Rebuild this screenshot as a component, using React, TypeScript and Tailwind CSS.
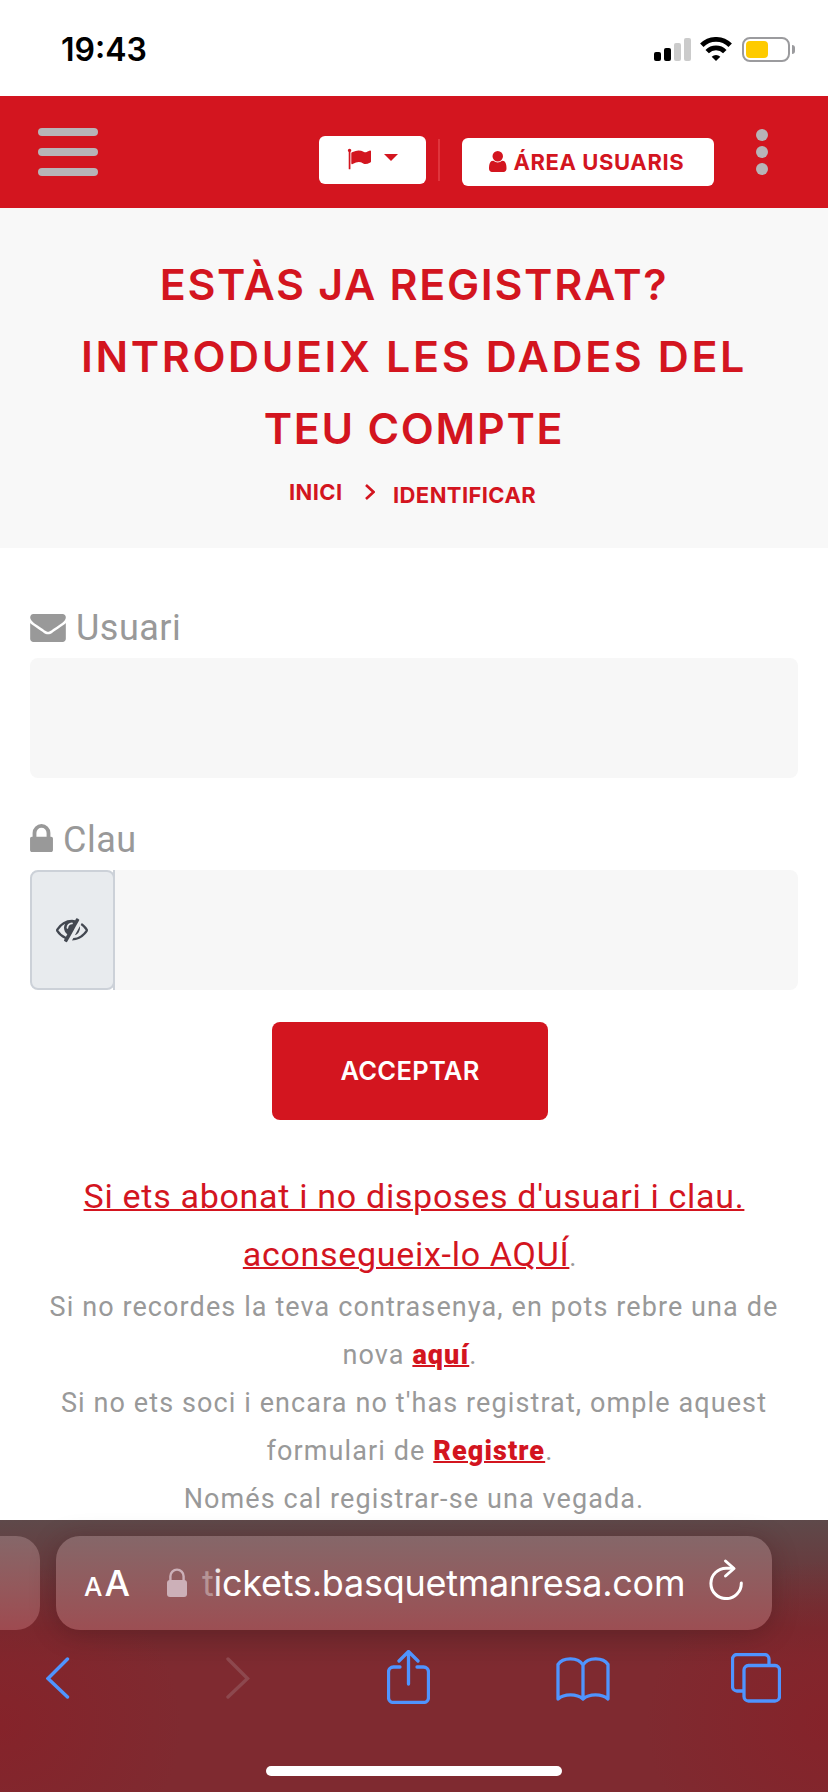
import type { ReactNode } from "react";

const icons = {
  flag: "M320 256q0 72-64 110v1266q0 13-9.5 22.5t-22.5 9.5h-64q-13 0-22.5-9.5t-9.5-22.5v-1266q-64-38-64-110 0-53 37.5-90.5t90.5-37.5 90.5 37.5 37.5 90.5zm1472 64v763q0 25-12.5 38.5t-39.5 27.5q-215 116-369 116-61 0-123.5-22t-108.5-48-115.5-48-142.5-22q-192 0-464 146-17 9-33 9-26 0-45-19t-19-45v-742q0-32 31-55 21-14 79-43 236-120 421-120 107 0 200 29t219 88q38 19 88 19 54 0 117.5-21t110-47 88-47 54.5-21q26 0 45 19t19 45z",
  user: "M1536 1399q0 109-62.5 187t-150.5 78h-854q-88 0-150.5-78t-62.5-187q0-85 8.5-160.5t31.5-152 58.5-131 94-89 134.5-34.5q131 128 313 128t313-128q76 0 134.5 34.5t94 89 58.5 131 31.5 152 8.5 160.5zm-256-887q0 159-112.5 271.5t-271.5 112.5-271.5-112.5-112.5-271.5 112.5-271.5 271.5-112.5 271.5 112.5 112.5 271.5z",
  envelope:
    "M1792 710v794q0 66-47 113t-113 47h-1472q-66 0-113-47t-47-113v-794q44 49 101 87 362 246 497 345 57 42 92.5 65.5t94.5 48 110 24.5h2q51 0 110-24.5t94.5-48 92.5-65.5q170-123 498-345 57-39 100-87zm0-294q0 79-49 151t-122 123q-376 261-468 325-10 7-42.5 31t-54 38.5-52 32.5-57.5 27-50 9h-2q-23 0-50-9t-57.5-27-52-32.5-54-38.5-42.5-31q-91-64-262-182.5t-205-142.5q-62-42-117-115.5t-55-136.5q0-78 41.5-130t118.5-52h1472q65 0 112.5 47t47.5 113z",
  lock: "M640 768h512v-192q0-106-75-181t-181-75-181 75-75 181v192zm832 96v576q0 40-28 68t-68 28h-960q-40 0-68-28t-28-68v-576q0-40 28-68t68-28h32v-192q0-184 132-316t316-132 316 132 132 316v192h32q40 0 68 28t28 68z",
  eyeSlash:
    "M555 1335l78-141q-87-63-136-159t-49-203q0-121 61-225-229 117-381 353 167 258 427 375zm389-759q0-20-14-34t-34-14q-125 0-214.5 89.5t-89.5 214.5q0 20 14 34t34 14 34-14 14-34q0-86 61-147t147-61q20 0 34-14t14-34zm363-191q0 7-1 9-105 188-315 566t-316 567l-49 89q-10 16-28 16-12 0-134-70-16-10-16-28 0-12 44-87-143-65-263.5-173t-208.5-245q-20-31-20-69t20-69q153-235 380-371t496-136q89 0 180 17l54-97q10-16 28-16 5 0 18 6t31 15.5 33 18.5 31.5 18.5 19.5 11.5q16 10 16 27zm37 447q0 139-79 253.5t-209 164.5l280-502q8 45 8 84zm448 128q0 35-20 69-39 64-109 145-150 172-347.5 267t-419.5 95l74-132q212-18 392.5-137t301.5-307q-115-179-282-294l63-112q95 64 182.5 153t144.5 184q20 34 20 69z",
};

function Icon({ name, box, className }: { name: keyof typeof icons; box: string; className: string }) {
  return (
    <svg viewBox={box} fill="currentColor" className={className}>
      <path d={icons[name]} />
    </svg>
  );
}

function StatusBar() {
  return (
    <div className="flex h-24 items-start justify-between bg-white pl-[61px] pr-[33px] font-['Inter',sans-serif]">
      <span className="mt-[30px] text-[32px] font-semibold leading-10 text-black">19:43</span>
      <div className="mt-[37px] flex items-start">
        <div className="mt-px flex h-[23px] items-end gap-[3px]">
          <i className="h-[9px] w-[7px] rounded-[2px] bg-black" />
          <i className="h-[13px] w-[7px] rounded-[2px] bg-black" />
          <i className="h-[18px] w-[7px] rounded-[2px] bg-[#cbcbcb]" />
          <i className="h-[23px] w-[7px] rounded-[2px] bg-[#cbcbcb]" />
        </div>
        <svg viewBox="0 0 32 24" className="ml-[9px] h-6 w-8" fill="none" stroke="#000" strokeWidth="4.8">
          <path d="M1.800 8.300a20 20 0 0 1 28.400 0" />
          <path d="M7.200 14.600a12.300 12.300 0 0 1 17.600 0" />
          <path d="M16 24l-4.300-4.300a6.200 6.200 0 0 1 8.600 0z" fill="#000" stroke="none" />
        </svg>
        <div className="ml-[10px] flex h-[25px] w-12 rounded-[8px] border-2 border-[#9b9b9e] p-[2px]">
          <div className="h-[17px] w-[22px] rounded-[4px] bg-[#fecb00]" />
        </div>
        <div className="ml-[2px] mt-[8px] h-[9px] w-[3px] rounded-r-full bg-[#9b9b9e]" />
      </div>
    </div>
  );
}

function Header() {
  return (
    <header className="flex h-28 items-start bg-[#d3151f] pl-[38px] text-[#d3151f]">
      <div className="mt-8 flex flex-col gap-3">
        <i className="h-2 w-[60px] rounded-full bg-[#b7b4b7]" />
        <i className="h-2 w-[60px] rounded-full bg-[#b7b4b7]" />
        <i className="h-2 w-[60px] rounded-full bg-[#b7b4b7]" />
      </div>
      <button className="ml-[221px] mt-10 flex h-12 w-[107px] items-start rounded-[6px] bg-white pl-[28px] pt-[11px]">
        <Icon name="flag" box="0 0 1792 1792" className="h-6 w-6" />
        <svg viewBox="0 0 14 7" className="ml-[13px] mt-[7px] h-[7px] w-[14px]" fill="currentColor">
          <path d="M0 0h14L7 7z" />
        </svg>
      </button>
      <i className="ml-3 mt-[43px] h-[42px] w-[2px] bg-[#e0353c]" />
      <button className="ml-[22px] mt-[42px] flex h-12 w-[252px] items-start rounded-[6px] bg-white pl-[27px]">
        <Icon name="user" box="256 128 1280 1536" className="mt-[13px] h-[21px] w-[17.5px]" />
        <span className="ml-[7px] mt-[8px] whitespace-nowrap font-['Inter',sans-serif] text-[22px] font-bold leading-8 tracking-[0.6px]">
          ÁREA USUARIS
        </span>
      </button>
      <div className="ml-[42px] mt-[33px] flex flex-col gap-[5px]">
        <i className="size-3 rounded-full bg-[#b7b4b7]" />
        <i className="size-3 rounded-full bg-[#b7b4b7]" />
        <i className="size-3 rounded-full bg-[#b7b4b7]" />
      </div>
    </header>
  );
}

function PageTitle() {
  return (
    <section className="h-[340px] bg-[#f8f8f8] pt-10 text-center font-['Inter',sans-serif] text-[#d3151f]">
      <h1 className="whitespace-nowrap text-[43px] font-semibold leading-[72px]">
        <span className="block tracking-[1.7px]">ESTÀS JA REGISTRAT?</span>
        <span className="block tracking-[2.6px]">INTRODUEIX LES DADES DEL</span>
        <span className="block tracking-[1.7px]">TEU COMPTE</span>
      </h1>
      <nav className="flex items-start pl-[289px] text-[22px] font-bold leading-8 tracking-[0.4px]">
        <span className="w-[76px] pt-[12px] text-left">INICI</span>
        <svg viewBox="0 0 10 16" className="mt-[20px] h-4 w-[10px]" fill="none" stroke="currentColor" strokeWidth="2.6">
          <path d="M1 1l7.500 7L1 15" />
        </svg>
        <span className="ml-[18px] pt-[15px]">IDENTIFICAR</span>
      </nav>
    </section>
  );
}

function FieldLabel({ icon, children }: { icon: ReactNode; children: ReactNode }) {
  return (
    <label className="flex h-11 items-start text-[36px] leading-[46px] tracking-[0.5px] text-[#999]">
      {icon}
      {children}
    </label>
  );
}

function LoginForm() {
  return (
    <form className="flex flex-col px-[30px] pt-[57px]">
      <FieldLabel icon={<Icon name="envelope" box="0 256 1792 1408" className="mr-[10px] mt-[9px] h-7 w-9" />}>
        Usuari
      </FieldLabel>
      <div className="mt-[9px] h-[120px] rounded-[8px] bg-[#f7f7f7]" />
      <div className="mt-[39px]">
        <FieldLabel icon={<Icon name="lock" box="320 128 1152 1408" className="mr-[10px] mt-[7px] h-7 w-[23px]" />}>
          Clau
        </FieldLabel>
      </div>
      <div className="mt-[9px] flex h-[120px]">
        <div className="flex w-[85px] border-r-2 border-[#ccd1d8]">
          <div className="-mr-[2px] flex w-[85px] shrink-0 items-start justify-center rounded-[8px] border-2 border-[#ccd1d8] bg-[#e8ebee] pr-[2px] pt-[41px] text-[#434851]">
            <Icon name="eyeSlash" box="0 0 1792 1792" className="h-8 w-8" />
          </div>
        </div>
        <div className="flex-1 rounded-r-[8px] bg-[#f7f7f7]" />
      </div>
      <button className="ml-[242px] mt-8 h-[98px] w-[276px] rounded-[8px] bg-[#d3151f] font-['Inter',sans-serif] text-[25.5px] font-semibold tracking-[0.3px] text-white">
        ACCEPTAR
      </button>
    </form>
  );
}

function HelpText() {
  return (
    <div className="mt-[47px] whitespace-nowrap text-center text-[27px] leading-[48px] tracking-[1.1px] text-[#999]">
      <p className="text-[34px] leading-[58px] tracking-[0.7px]">
        <a className="text-[#d3151f] underline decoration-2">
          Si ets abonat i no disposes d'usuari i clau.
          <br />
          aconsegueix-lo AQUÍ
        </a>
        <span className="pr-2 text-[27px] leading-none">.</span>
      </p>
      <p>
        Si no recordes la teva contrasenya, en pots rebre una de
        <br />
        nova <a className="font-black text-[#d3151f] underline decoration-2">aquí</a>
        <span className="pr-2">.</span>
      </p>
      <p>
        Si no ets soci i encara no t'has registrat, omple aquest
        <br />
        formulari de <a className="font-black text-[#d3151f] underline decoration-2">Registre</a>
        <span className="pr-2">.</span>
      </p>
      <p>Només cal registrar-se una vegada.</p>
    </div>
  );
}

function BrowserBar() {
  return (
    <footer className="flex h-[272px] flex-col bg-[radial-gradient(ellipse_22%_60%_at_0%_75%,#85232a,transparent),radial-gradient(ellipse_22%_60%_at_100%_75%,#85232a,transparent),linear-gradient(#5e494a,#742a2f_40%,#7f2a30_55%,#7f2a30)] font-['Inter',sans-serif] text-white">
      <div className="flex h-[110px] gap-4 pt-4">
        <div className="h-[94px] w-10 rounded-r-[24px] bg-linear-to-b from-[#856769] to-[#9e4a50]" />
        <div className="flex h-[94px] w-[716px] items-start rounded-[24px] bg-linear-to-b from-[#856769] to-[#9c4e53] pl-[28px] shadow-[0_4px_24px_rgba(60,20,24,0.35)]">
          <div className="mt-[23px] flex items-baseline whitespace-nowrap font-medium leading-[48px]">
            <span className="text-[26px]">A</span>
            <span className="ml-[2px] text-[36px]">A</span>
          </div>
          <svg viewBox="0 0 20 29" className="ml-[37px] mt-[32px] h-[29px] w-5">
            <rect x="0" y="12" width="20" height="17" rx="3" fill="#ccb0b8" />
            <path d="M3.400 13V8.200a6.600 6.600 0 0 1 13.200 0V13" fill="none" stroke="#ccb0b8" strokeWidth="2.4" />
          </svg>
          <span className="ml-[15px] mt-[23px] whitespace-nowrap text-[36px] leading-[48px] tracking-[-0.25px]">
            <span className="text-white/35">t</span>
            <span className="text-white/85">i</span>ckets.basquetmanresa.com
          </span>
          <svg
            viewBox="0 0 34 42"
            className="ml-[24px] mt-[22px] h-[42px] w-[34px] shrink-0"
            fill="none"
            stroke="#fff"
            strokeWidth="3"
            strokeLinecap="round"
            strokeLinejoin="round"
          >
            <path d="M24 10.200h-6.500A15.200 15.200 0 1 0 32.300 25" />
            <path d="M16.500 3l8.500 7.500L16.500 18" />
          </svg>
        </div>
      </div>
      <div className="flex h-[144px] items-start pt-[20px]">
        <svg viewBox="0 0 24 42" className="ml-[46px] mt-[7px] h-[42px] w-6" fill="none" stroke="#4f94ff" strokeWidth="3.400" strokeLinecap="round">
          <path d="M21.500 2L2 21.500 21.500 40" />
        </svg>
        <svg viewBox="0 0 24 42" className="ml-[156px] mt-[7px] h-[42px] w-6" fill="none" stroke="#8d484e" strokeWidth="3.400" strokeLinecap="round">
          <path d="M2 2l19.500 19.500L2 40" />
        </svg>
        <svg viewBox="0 0 43 54" className="ml-[137px] h-[54px] w-[43px]" fill="none" stroke="#4f94ff" strokeWidth="3.300" strokeLinecap="round" strokeLinejoin="round">
          <path d="M13 17H6.500a5 5 0 0 0-5 5v25.500a5 5 0 0 0 5 5h30a5 5 0 0 0 5-5V22a5 5 0 0 0-5-5H30" />
          <path d="M21.500 34V2M12 11l9.500-9.500L31 11" />
        </svg>
        <svg viewBox="0 0 54 44" className="ml-[126px] mt-[7px] h-[44px] w-[54px]" fill="none" stroke="#4f94ff" strokeWidth="3.300" strokeLinejoin="round">
          <path d="M27 8C22 0 7 0 2 7.500V42c6-5.500 19-5.500 25 0 6-5.500 19-5.500 25 0V7.500C47 0 32 0 27 8zV42" />
        </svg>
        <svg viewBox="0 0 50 50" className="ml-[121px] mt-[3px] size-[50px]" fill="none" stroke="#4f94ff" strokeWidth="3.300">
          <path d="M12.500 38H6a4.500 4.500 0 0 1-4.500-4.500V6A4.500 4.500 0 0 1 6 1.500h27.500A4.500 4.500 0 0 1 38 6v6" />
          <rect x="13" y="12.500" width="35.500" height="35.500" rx="4.500" />
        </svg>
      </div>
      <div className="mx-auto -mt-[8px] h-[10px] w-[296px] rounded-full bg-white" />
    </footer>
  );
}

export default function App() {
  return (
    <main className="w-[828px] overflow-hidden bg-white font-['Roboto',sans-serif]">
      <div className="h-[1520px] overflow-hidden">
        <StatusBar />
        <Header />
        <PageTitle />
        <LoginForm />
        <HelpText />
      </div>
      <BrowserBar />
    </main>
  );
}
